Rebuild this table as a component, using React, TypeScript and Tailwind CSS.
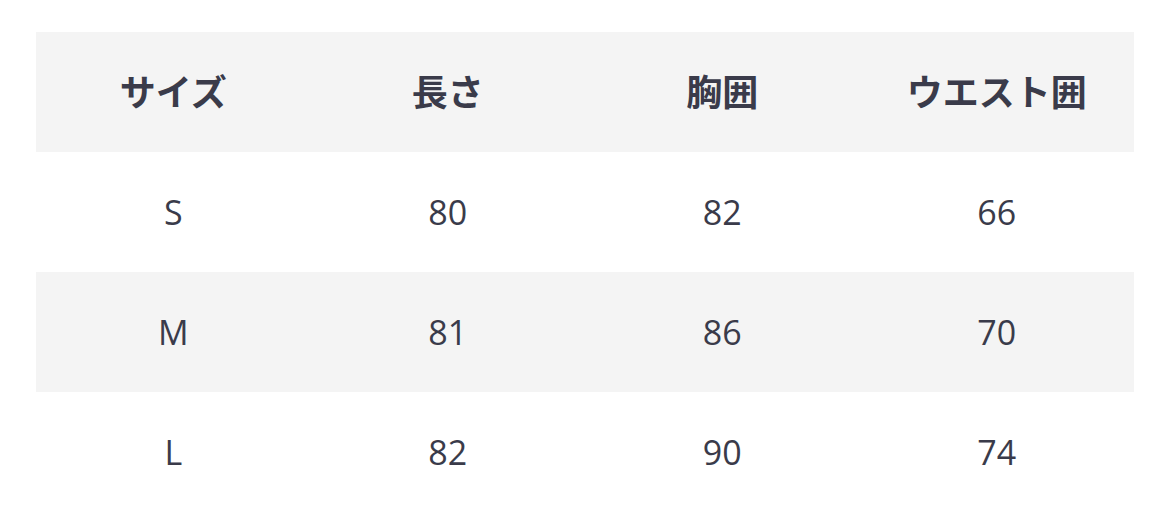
export default function App() {
  const header = ["サイズ", "長さ", "胸囲", "ウエスト囲"];
  const rows = [
    ["S", "80", "82", "66"],
    ["M", "81", "86", "70"],
    ["L", "82", "90", "74"],
  ];
  return (
    <div className="w-[1170px] h-[517px] bg-white pt-[32px] pl-[36px]">
      <div className="w-[1098px] text-[#3a3b4a]" style={{ fontFamily: '"Open Sans", "Noto Sans CJK JP", sans-serif' }}>
        <div className="grid grid-cols-4 h-[120px] bg-[#f4f4f4] items-center pb-[4px]">
          {header.map((h) => (
            <div key={h} className="text-center text-[36px] font-bold" style={{ fontFamily: '"Noto Sans CJK JP", sans-serif' }}>
              {h}
            </div>
          ))}
        </div>
        {rows.map((r, i) => (
          <div key={i} className={`grid grid-cols-4 h-[120px] items-center ${i % 2 === 1 ? "bg-[#f4f4f4]" : "bg-white"}`}>
            {r.map((c, j) => (
              <div key={j} className="text-center text-[34px]">
                {c}
              </div>
            ))}
          </div>
        ))}
      </div>
    </div>
  );
}
